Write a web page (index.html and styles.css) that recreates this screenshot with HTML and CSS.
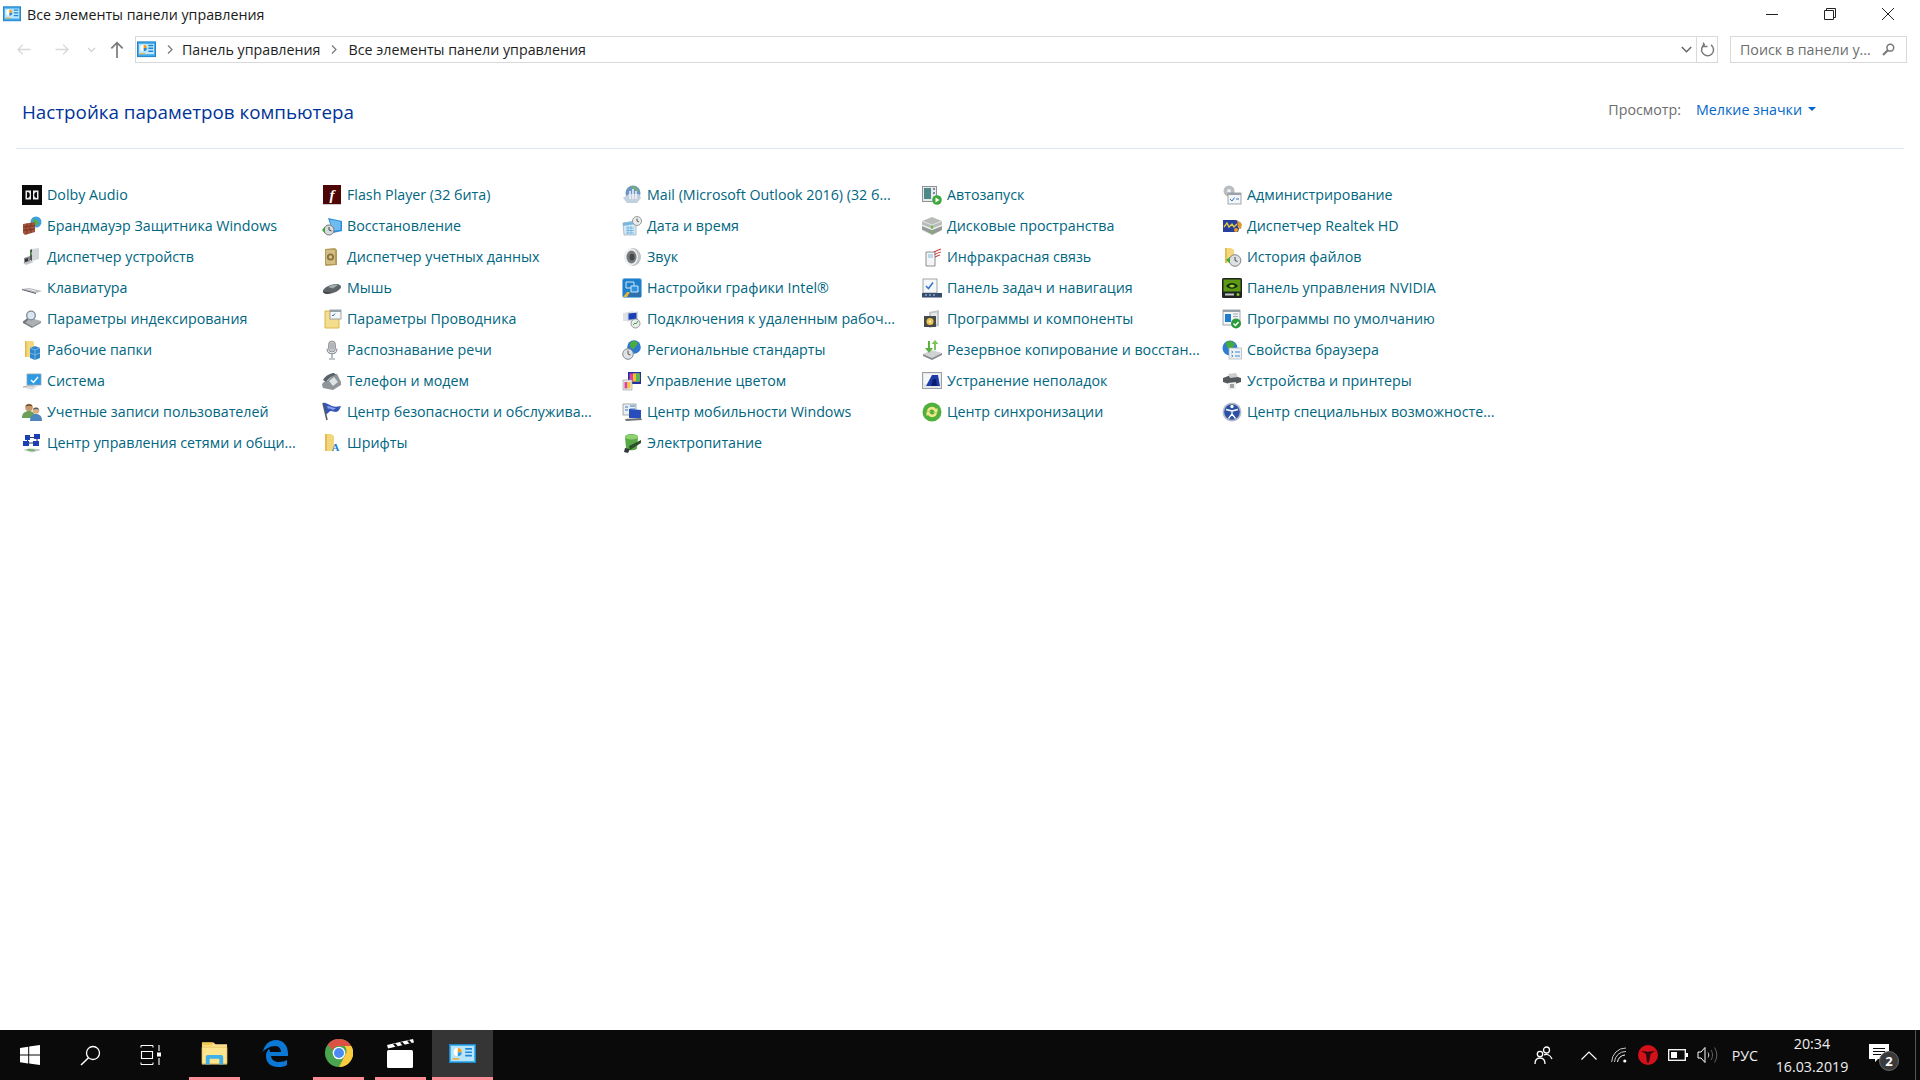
FILE: index.html
```html
<!DOCTYPE html>
<html lang="ru">
  <head>
    <meta charset="UTF-8" />
    <title>Все элементы панели управления</title>
    <link rel="stylesheet" href="styles.css">
  </head>
  <body>
    <svg class="defs" width="0" height="0">
      <symbol id="cp" viewBox="0 0 20 20">
        <rect x="0.5" y="2" width="19" height="15.5" fill="#3aa8ea" stroke="#1d7fc4"/>
        <rect x="2" y="4" width="16" height="11" fill="#bfe6fb"/>
        <circle cx="7" cy="8.5" r="3.4" fill="#fff"/>
        <path d="M7 8.5V5.1a3.4 3.4 0 0 1 3.4 3.4z" fill="#f0a21e"/>
        <path d="M7 8.5h3.4A3.4 3.4 0 0 1 7 11.9z" fill="#2b86d0"/>
        <path d="M12 5h5v1.5h-5zM12 8h5v1.5h-5zM12 11h5v1.5h-5z" fill="#1f87d6"/>
        <path d="M2.500 14h6v1h-6z" fill="#f0a21e"/>
      </symbol>
    </svg>

    <div class="titlebar">
      <svg class="title-icon"><use href="#cp"/></svg>
      <span class="title-text">Все элементы панели управления</span>
      <div class="win-controls">
        <svg width="14" height="14" viewBox="0 0 14 14"><path d="M1 7.500h12" stroke="#222" fill="none"/></svg>
        <svg width="14" height="14" viewBox="0 0 14 14"><path d="M1.500 3.500h9v9h-9zM3.500 3.500v-2h9v9h-2" stroke="#222" fill="none"/></svg>
        <svg width="14" height="14" viewBox="0 0 14 14"><path d="M1 1l12 12M13 1L1 13" stroke="#222" fill="none"/></svg>
      </div>
    </div>

    <div class="navbar">
      <div class="nav-buttons">
        <svg width="16" height="13" viewBox="0 0 14 12"><path d="M13 6H1.500M6 1.500L1.500 6 6 10.500" stroke="#d8d8d8" stroke-width="1.300" fill="none"/></svg>
        <svg width="16" height="13" viewBox="0 0 14 12"><path d="M1 6h11.500M8 1.500L12.500 6 8 10.500" stroke="#d8d8d8" stroke-width="1.300" fill="none"/></svg>
        <svg width="9" height="6" viewBox="0 0 8 6"><path d="M.5 1L4 4.500 7.500 1" stroke="#d0d0d0" stroke-width="1.200" fill="none"/></svg>
        <svg width="14" height="17" viewBox="0 0 12 15"><path d="M6 15V1.500M1 6.500l5-5 5 5" stroke="#7a7a7a" stroke-width="1.500" fill="none"/></svg>
      </div>
      <div class="address">
        <svg class="address-icon"><use href="#cp"/></svg>
        <svg class="crumb-sep" width="6" height="9" viewBox="0 0 6 9"><path d="M1 .5l4 4-4 4" stroke="#777" stroke-width="1.200" fill="none"/></svg>
        <span>Панель управления</span>
        <svg class="crumb-sep" width="6" height="9" viewBox="0 0 6 9"><path d="M1 .5l4 4-4 4" stroke="#777" stroke-width="1.200" fill="none"/></svg>
        <span>Все элементы панели управления</span>
        <svg class="address-drop" width="11" height="7" viewBox="0 0 11 7"><path d="M.8 1l4.700 4.700L10.200 1" stroke="#666" stroke-width="1.500" fill="none"/></svg>
        <div class="refresh">
          <svg width="15" height="15" viewBox="0 0 15 15"><path d="M5 2.300A6 6 0 1 0 11 2.800" stroke="#7a7a7a" stroke-width="1.500" fill="none"/><path d="M3.500 0.500v4h4" stroke="#7a7a7a" stroke-width="1.300" fill="none"/></svg>
        </div>
      </div>
      <div class="search">
        <span>Поиск в панели у...</span>
        <svg width="13" height="13" viewBox="0 0 13 13"><circle cx="8.300" cy="4.700" r="3.400" stroke="#777" stroke-width="1.500" fill="none"/><path d="M5.800 7.200L1 12" stroke="#777" stroke-width="2"/></svg>
      </div>
    </div>

    <main class="content">
      <div class="content-head">
        <h1>Настройка параметров компьютера</h1>
        <div class="view-by">
          <span class="view-label">Просмотр:</span>
          <span class="view-value">Мелкие значки</span>
          <span class="view-caret"></span>
        </div>
      </div>

      <div class="items">
        <a class="item"><svg viewBox="0 0 20 20"><rect width="20" height="20" fill="#0a0a0a"/><path d="M3.500 5.500h5.500v9H3.500zM16.500 5.500H11v9h5.500z" fill="#eee"/><path d="M5 7a3 3 0 0 1 2.800 3A3 3 0 0 1 5 13zM15 7a3 3 0 0 0-2.800 3A3 3 0 0 0 15 13z" fill="#0a0a0a"/></svg>Dolby Audio</a>
        <a class="item"><svg viewBox="0 0 20 20"><circle cx="14" cy="6" r="5.500" fill="#3f9fe0"/><path d="M11 2.500c3 0 4 3 6 3.500-1 3-3 4-5 3z" fill="#55b04a"/><path d="M1 8l12-2v10L3 19 1 17z" fill="#a2543c"/><path d="M1 11l12-1.500M1 14.500l12-1.500M5 7.500v3M9 7v3M4 11v3M8 10.500v3M5 14.500v3.500M9 14v3" stroke="#6f3022" stroke-width=".8"/></svg>Брандмауэр Защитника Windows</a>
        <a class="item"><svg viewBox="0 0 20 20"><path d="M10 2l7-1v11l-7 2z" fill="#d3d6d8"/><path d="M8 3l2-1v12l-2-1z" fill="#555"/><rect x="8.500" y="5" width="1.500" height="3" fill="#53b24a"/><path d="M2 11l6-2v6l-6 2z" fill="#8a8d90"/><path d="M1 16l8-2 3 1-8 3z" fill="#c4c7c9"/><path d="M3 12l3-1v3l-3 1z" fill="#333"/></svg>Диспетчер устройств</a>
        <a class="item"><svg viewBox="0 0 20 20"><path d="M0 11l7-1 13 3-6 2z" fill="#b5b9bc"/><path d="M0 11l14 4v1L0 12z" fill="#54595d"/><path d="M4 11l2-.3 9 2.300-2 .5z" fill="#eef0f1"/></svg>Клавиатура</a>
        <a class="item"><svg viewBox="0 0 20 20"><path d="M1 12l8-3 10 3-9 5z" fill="#aeb1b4"/><path d="M1 12v2l9 5v-2z" fill="#7b7e80"/><path d="M10 17v2l9-5v-2z" fill="#909396"/><circle cx="9" cy="6.500" r="4.300" fill="#d7e8f4" stroke="#7d8a94" stroke-width="1.300"/><path d="M5.500 10L1.500 14" stroke="#6a7076" stroke-width="1.800"/></svg>Параметры индексирования</a>
        <a class="item"><svg viewBox="0 0 20 20"><path d="M3 1h8l1 2v14H3z" fill="#f4d77f"/><path d="M3 1h1.500v16H3z" fill="#e2b94f"/><path d="M8 8l5-2 5 2v10l-5 2-5-2z" fill="#2f86c8"/><path d="M8 8l5 2 5-2M13 10v10M8 13l5 2 5-2" stroke="#7fc0ee" stroke-width=".8" fill="none"/></svg>Рабочие папки</a>
        <a class="item"><svg viewBox="0 0 20 20"><path d="M5 3h14v11H5z" fill="#2d9be4" stroke="#8aa2b2" stroke-width=".8"/><path d="M9 9l2.500 2.500L16 6" stroke="#fff" stroke-width="1.400" fill="none"/><path d="M0 16l7-2 9 1-6 4z" fill="#dcdfe1"/><path d="M1 16.200l6-1.700 5 .6" stroke="#a7abae" fill="none"/></svg>Система</a>
        <a class="item"><svg viewBox="0 0 20 20"><circle cx="7" cy="5.500" r="3.800" fill="#c79a6d"/><path d="M3.500 4.500c1-3 6-3 7 0-2-1-5-1-7 0z" fill="#6b4a2a"/><path d="M0 16c0-5 3-7 7-7s6 2 6 7z" fill="#6aa05a"/><circle cx="14" cy="8.500" r="3.300" fill="#d9ae83"/><path d="M11 7.500c.8-2.500 5-2.500 6 0-2-.8-4-.8-6 0z" fill="#4e5a6b"/><path d="M8 19c0-5 2.500-7 6-7s6 2 6 7z" fill="#4b87bd"/></svg>Учетные записи пользователей</a>
        <a class="item"><svg viewBox="0 0 20 20"><path d="M3 2h5v5H3zM12 1h6v5h-6zM1 8h6v5H1zM11 8h6v5h-6z" fill="#1d3fb4"/><path d="M5.500 7v1M15 6v2M7 10h4M8 4.500h4" stroke="#333a66"/><path d="M1 17l6-1.500 9 .5 3 1-9 2.500z" fill="#c2c6c8"/><path d="M5 16l7 .5 1 1.500-7-.5z" fill="#58b848"/></svg>Центр управления сетями и общи...</a>

        <a class="item"><svg viewBox="0 0 20 20"><rect x="1" width="18" height="19" fill="#4d0505"/><rect x="1" y="19" width="18" height="1" fill="#ccc"/><text x="10" y="15" text-anchor="middle" class="flash-f">f</text></svg>Flash Player (32 бита)</a>
        <a class="item"><svg viewBox="0 0 20 20"><path d="M6 2l14 3v10l-9 2z" fill="#2d8fdb"/><path d="M8 3.500l10.500 2.300v8L10 15z" fill="#6fbdf0"/><circle cx="7" cy="14" r="5" fill="#d8dbdd" stroke="#777"/><path d="M7 11v3l2.500 1" stroke="#444" fill="none"/><path d="M0 14l3-3.500v7z" fill="#3fa83c"/></svg>Восстановление</a>
        <a class="item"><svg viewBox="0 0 20 20"><path d="M3 2l10-1 2 2v15l-11 1-1-1z" fill="#b59a5a"/><path d="M4 3h9v14H4z" fill="#d3bd82"/><circle cx="8.500" cy="10" r="3.600" fill="#8b7340"/><circle cx="8.500" cy="10" r="1.700" fill="#d9c68f"/></svg>Диспетчер учетных данных</a>
        <a class="item"><svg viewBox="0 0 20 20"><path d="M1 13c0-3 7-7 13-7 4 0 5 2 5 3 0 3-8 7-13 7-4 0-5-1-5-3z" fill="#5d6367"/><path d="M6 9c3-2 6-3 10-2l-5 3.500z" fill="#a4a9ac"/><path d="M1 13c1 3 5 3 9 1.500-4 .5-7 0-9-1.500z" fill="#2e3235"/></svg>Мышь</a>
        <a class="item"><svg viewBox="0 0 20 20"><path d="M3 2h8v4h6v13H3z" fill="#f5dd8e" stroke="#dcb446"/><rect x="8" y="1" width="11" height="9" fill="#f4f6f7" stroke="#8a9096" stroke-width=".8"/><rect x="8" y="1" width="11" height="2" fill="#98a2aa"/><path d="M10 6l1 1 2-2.500" stroke="#2c74c9" fill="none"/></svg>Параметры Проводника</a>
        <a class="item"><svg viewBox="0 0 20 20"><rect x="6.500" y="1" width="7" height="11" rx="3.500" fill="#c3c7ca" stroke="#81868a" stroke-width=".8"/><path d="M7.500 4h5M7.500 6h5M7.500 8h5" stroke="#8f9498" stroke-width=".7"/><path d="M5 8.500c0 7 10 7 10 0M10 14v4M7 19h6" stroke="#8a8f93" stroke-width="1.200" fill="none"/></svg>Распознавание речи</a>
        <a class="item"><svg viewBox="0 0 20 20"><path d="M0 14c0-2 3-4 5-4L12 3h3l4 8v3l-8 5-10-2z" fill="#8f9599"/><path d="M1 9c3-5 8-7 11-7l2 2c-3 0-7 3-10 7z" fill="#58626a"/><path d="M7 10l5-4 4 5-5 4z" fill="#dfe3e5"/></svg>Телефон и модем</a>
        <a class="item"><svg viewBox="0 0 20 20"><path d="M1 1c2-1 4 1 7 2 3 2 6 2 11 1-1 3-3 6-5 6-3 0-5-2-7 0-1 1-2 2-3 2z" fill="#3454b7"/><path d="M5 4c3 0 5 2 9 2l-3 2c-2-1-4-2-5-1z" fill="#8ea3e6"/><path d="M1 1l4 17" stroke="#4f565e" stroke-width="1.500"/></svg>Центр безопасности и обслужива...</a>
        <a class="item"><svg viewBox="0 0 20 20"><path d="M3 1h6l3 2v15H3z" fill="#f3d67c"/><path d="M3 1h2v17H3z" fill="#e3bc55"/><text x="13.500" y="17.500" text-anchor="middle" class="font-a">A</text></svg>Шрифты</a>

        <a class="item"><svg viewBox="0 0 20 20"><circle cx="11" cy="8" r="7.500" fill="#6d95c4"/><path d="M8 2c4-2 8 1 9 5-3-1-5-4-9-5z" fill="#79b06f"/><path d="M1 13l6-4h10l2 4-4 5H5z" fill="#c3d0e0"/><path d="M8 6v8M11 4v10M14 6v8" stroke="#f2f4f7" stroke-width="1.500"/></svg>Mail (Microsoft Outlook 2016) (32 б...</a>
        <a class="item"><svg viewBox="0 0 20 20"><path d="M1 7l13-2v14H2z" fill="#d3e8f5" stroke="#94aab8" stroke-width=".7"/><path d="M1 7l13-2v3L1 10z" fill="#78b7e0"/><path d="M4 12h8M4 14.500h8M4 17h8M6 10v8M9 10v8" stroke="#6ab0de" stroke-width=".8"/><circle cx="15" cy="5" r="4.500" fill="#e8eaeb" stroke="#999"/><path d="M15 2.500V5l2 1" stroke="#555" fill="none"/></svg>Дата и время</a>
        <a class="item"><svg viewBox="0 0 20 20"><ellipse cx="11" cy="10" rx="8" ry="9" fill="#c0c3c5"/><ellipse cx="9" cy="10" rx="7" ry="8.500" fill="#eef0f1"/><ellipse cx="9.500" cy="10" rx="5" ry="6.500" fill="#777b7e"/><ellipse cx="10" cy="10" rx="2.500" ry="3.500" fill="#44484b"/></svg>Звук</a>
        <a class="item"><svg viewBox="0 0 20 20"><rect x=".5" y=".5" width="19" height="19" rx="2" fill="#1f7fcb" stroke="#7fb9e5"/><path d="M1 19L5 14h14v5z" fill="#2f6fab"/><path d="M1 19l4-5h3l-3 5z" fill="#e2b63d"/><path d="M4 4h8v6H4z" fill="none" stroke="#cfeafc"/><path d="M9 8h7v6H9z" fill="#2f91d9" stroke="#cfeafc"/></svg>Настройки графики Intel®</a>
        <a class="item"><svg viewBox="0 0 20 20"><path d="M1 4l10-2v10L1 12z" fill="#e0e3e5"/><path d="M5 3.500l11-1v9l-11 1z" fill="#d5dade"/><path d="M6.500 4.500l8-.8v6.300l-8 .7z" fill="#1b3fb5"/><circle cx="13.500" cy="14.500" r="4.500" fill="#e9eced" stroke="#93999d"/><path d="M11 16l2-2 1 1 2-3" stroke="#48a83f" fill="none"/></svg>Подключения к удаленным рабоч...</a>
        <a class="item"><svg viewBox="0 0 20 20"><circle cx="12" cy="7" r="6.800" fill="#2f78d0"/><path d="M8 3c3-3 6-2 8 0-1 3-3 3-4 6-3 0-4-3-4-6z" fill="#49ad3e"/><circle cx="6" cy="14" r="5.300" fill="#dfe2e4" stroke="#848a8e"/><path d="M6 10.500V14l2.500 1" stroke="#555" fill="none"/></svg>Региональные стандарты</a>
        <a class="item"><svg viewBox="0 0 20 20"><rect x="6" y="1" width="13" height="12" fill="#23319d"/><path d="M7.500 2.500h10v8h-10z" fill="#e23ca5"/><path d="M11 2.500h6.500v8H11z" fill="#f2c12f"/><path d="M14 2.500h3.500v8H14z" fill="#4aba52"/><path d="M1 9h9v10H1z" fill="#e9ebec" stroke="#9ba0a4" stroke-width=".7"/><path d="M2.500 11h3v6.500h-3z" fill="#e0419f"/><path d="M5.500 11h3v6.500h-3z" fill="#f0cc2c"/></svg>Управление цветом</a>
        <a class="item"><svg viewBox="0 0 20 20"><path d="M1 2h13v11H1z" fill="#eceff1" stroke="#8f979e" stroke-width=".8"/><path d="M3 5h3M3 8h3M8 4h5M8 7h5" stroke="#2d78c8"/><path d="M7 7l12 1v8L7 16z" fill="#2a4dbc"/><path d="M3 17l16-1 1 2-16 1z" fill="#6a7075"/></svg>Центр мобильности Windows</a>
        <a class="item"><svg viewBox="0 0 20 20"><path d="M3 4c0-4 13-4 13 0l-1 11c0 3-11 3-11 0z" fill="#57a945"/><ellipse cx="9.500" cy="4" rx="6.500" ry="2.500" fill="#8fd070"/><path d="M7 13l12-6v3L8 17z" fill="#2f4f2c"/><path d="M3 15l5 1-2 4-4-1z" fill="#34393c"/></svg>Электропитание</a>

        <a class="item"><svg viewBox="0 0 20 20"><rect x=".5" y="1.500" width="14" height="15" fill="#e8ebed" stroke="#8d9296"/><rect x="2" y="3" width="7" height="11" fill="#4c8a8a"/><path d="M11 3h2v2h-2zM11 7h2v2h-2z" fill="#7d8c97"/><circle cx="15" cy="15" r="4.800" fill="#3fa83c"/><path d="M13.500 12.500l4 2.500-4 2.500z" fill="#fff"/></svg>Автозапуск</a>
        <a class="item"><svg viewBox="0 0 20 20"><path d="M0 5l10-4 10 4v4L10 13 0 9z" fill="#b9bdb9"/><path d="M0 10l10 4 10-4v4l-10 5-10-5z" fill="#979b97"/><path d="M0 5l10 4 10-4M0 9l10 4 10-4M0 14l10 5" stroke="#ececec" stroke-width=".8" fill="none"/><path d="M9 9.500l2 .5v3l-2-.5zM9 14.500l2 .5v3l-2-.5z" fill="#6dbb4b"/></svg>Дисковые пространства</a>
        <a class="item"><svg viewBox="0 0 20 20"><path d="M4 5h9v14H4z" fill="#f4f5f6" stroke="#6f7478" stroke-width=".8"/><path d="M6 7h5v4H6z" fill="#bcd7ea"/><path d="M12 5c2-1 4-2 7-3M12.500 7.500c2-1 4-2 6.500-2.500M13 10c2-1 3-1.500 5-2" stroke="#c74343" stroke-width="1.200" fill="none"/></svg>Инфракрасная связь</a>
        <a class="item"><svg viewBox="0 0 20 20"><rect x="1" y="1" width="14" height="14" fill="#f5f7f8" stroke="#8b9195" stroke-width=".8"/><path d="M4 8l2.500 2.500L11 4.500" stroke="#2f75c9" stroke-width="1.500" fill="none"/><path d="M0 15h20v4.500H0z" fill="#344c70"/><path d="M3 16.500h2v1H3zM7 16.500h2v1H7zM11 16.500h2v1h-2z" fill="#c4d0df"/></svg>Панель задач и навигация</a>
        <a class="item"><svg viewBox="0 0 20 20"><path d="M7 3l10-2v16l-10 2z" fill="#c4c7c9"/><path d="M9 4.500l6-1v11l-6 1z" fill="#e7e9ea"/><rect x="2" y="7" width="12" height="11" fill="#454a4d"/><circle cx="8" cy="12.500" r="3.500" fill="#efc64f"/><circle cx="8" cy="12.500" r="1" fill="#f8f8f8"/></svg>Программы и компоненты</a>
        <a class="item"><svg viewBox="0 0 20 20"><path d="M1 14l9-4 10 3-10 5z" fill="#d0d2d3"/><path d="M1 14v2l9 4 10-5v-2l-10 5z" fill="#878a8c"/><path d="M6 1v7H3l4 5 4-5H8V1z" fill="#5ab13f"/><path d="M12 10V4H9.500l3.500-4 3.500 4H14v6z" fill="#7cc55a"/></svg>Резервное копирование и восстан...</a>
        <a class="item"><svg viewBox="0 0 20 20"><rect x=".5" y="1.500" width="19" height="16" fill="#e4e7e9" stroke="#9ca1a5"/><path d="M2 3h16v10H2z" fill="#f5f6f7"/><path d="M4 15l6-11 6 0 2 11z" fill="#1d3ca8"/><path d="M9 15l2-7h3l1 7z" fill="#0c1f6f"/></svg>Устранение неполадок</a>
        <a class="item"><svg viewBox="0 0 20 20"><circle cx="10" cy="10" r="9.500" fill="#4fb13c"/><path d="M5 9a5 5 0 0 1 9-2l1.500-1v4.500H11l1.500-1.200A3 3 0 0 0 7 9.500z" fill="#f5e68a"/><path d="M15 11a5 5 0 0 1-9 2l-1.500 1V9.500H9L7.500 10.700A3 3 0 0 0 13 10.500z" fill="#f5e68a"/></svg>Центр синхронизации</a>
        <span class="item-empty"></span>

        <a class="item"><svg viewBox="0 0 20 20"><circle cx="7" cy="6" r="5.500" fill="#b9bdc0"/><circle cx="7" cy="6" r="2" fill="#eee"/><rect x="6" y="8" width="13" height="11" fill="#f4f5f6" stroke="#8c9196" stroke-width=".8"/><rect x="6" y="8" width="13" height="2" fill="#9aa3aa"/><path d="M8 14l2 2 2.500-3.500M14 14h3" stroke="#2c76c9" fill="none"/></svg>Администрирование</a>
        <a class="item"><svg viewBox="0 0 20 20"><path d="M1 4h13l5 3-3 9H1z" fill="#263f9c"/><path d="M2 11l3-4 2 4 3-3 2 3 3-3" stroke="#e6cc3f" stroke-width="1.400" fill="none"/><path d="M15 4l5 4-1 5-3-1z" fill="#d99a36"/><circle cx="14" cy="14" r="2" fill="#ef9a1d"/></svg>Диспетчер Realtek HD</a>
        <a class="item"><svg viewBox="0 0 20 20"><path d="M3 1h6l3 2v13H3z" fill="#f4d77c"/><path d="M3 1h2v15H3z" fill="#e4bd58"/><circle cx="13" cy="13.500" r="5.800" fill="#dde0e2" stroke="#7c8184"/><path d="M13 10v3.500l2.500 1" stroke="#444" fill="none"/><path d="M4 13l4-3v6z" fill="#3fa83c"/></svg>История файлов</a>
        <a class="item"><svg viewBox="0 0 20 20"><rect width="20" height="20" rx="1.500" fill="#1f2321"/><rect x="1.500" y="1.500" width="17" height="12" fill="#5b9a12"/><path d="M4 8c3-4 9-4 12 0-3 3.500-9 3.500-12 0z" fill="#1c2a10"/><path d="M7 8c2-2 4-2 6 0-2 2-4 2-6 0z" fill="#92d331"/><path d="M3 15.500h9v2H3z" fill="#c3c7c5"/><circle cx="16" cy="16.500" r="1.500" fill="#7fbf2b"/></svg>Панель управления NVIDIA</a>
        <a class="item"><svg viewBox="0 0 20 20"><rect x="1" y="1" width="17" height="15" fill="#f3f5f6" stroke="#8d9398" stroke-width=".8"/><rect x="1" y="1" width="17" height="2" fill="#98a2aa"/><path d="M3 5h6v8H3z" fill="#1f7dd0"/><path d="M11 5h5M11 7.500h5" stroke="#a2a8ad"/><circle cx="14" cy="14.500" r="5" fill="#2c9a3b"/><path d="M11.500 14.500l2 2 3-3.500" stroke="#fff" stroke-width="1.400" fill="none"/></svg>Программы по умолчанию</a>
        <a class="item"><svg viewBox="0 0 20 20"><circle cx="8" cy="8" r="7.500" fill="#2d7cd2"/><path d="M4 2c3-2 7-1 9 2-1 3-3 3-4 6-3 0-5-4-5-8z" fill="#46a93c"/><rect x="7" y="8" width="12.500" height="11" fill="#eef1f3" stroke="#aab0b4" stroke-width=".7"/><path d="M9.500 11l1.500 1-1.500 1M9.500 15l1.500 1-1.500 1M13 12h5M13 16h5" stroke="#3d8ad6" fill="none"/></svg>Свойства браузера</a>
        <a class="item"><svg viewBox="0 0 20 20"><path d="M1 7l8-3 10 3v4l-9 3-9-3z" fill="#54595d"/><path d="M6 3l8-1 2 4-8 1z" fill="#c9cdcf"/><path d="M6 12l8-1v7l-8 1z" fill="#eceeef"/><path d="M8 14h4M8 16h4" stroke="#555"/></svg>Устройства и принтеры</a>
        <a class="item"><svg viewBox="0 0 20 20"><circle cx="10" cy="10" r="9.500" fill="#b5bcc7"/><circle cx="10" cy="10" r="7.800" fill="#2c4fa8"/><circle cx="10" cy="4.500" r="1.700" fill="#fff"/><path d="M4 7.500l6 1.500 6-1.500M10 9v3l-3.500 4.500M10 12l3.500 4.500" stroke="#fff" stroke-width="1.300" fill="none"/></svg>Центр специальных возможносте...</a>
        <span class="item-empty"></span>
      </div>
    </main>

    <footer class="taskbar">
      <div class="task-start">
        <svg width="20" height="20" viewBox="0 0 20 20"><path d="M0 2.900l8.200-1.100v7.800H0zM9.200 1.600L20 0v9.600H9.200zM0 10.500h8.200v7.900L0 17.200zM9.200 10.500H20V20L9.200 18.500z" fill="#fff"/></svg>
      </div>
      <div class="task-tool">
        <svg width="21" height="21" viewBox="0 0 21 21"><circle cx="13" cy="8" r="6.500" stroke="#fff" stroke-width="1.300" fill="none"/><path d="M8.500 12.700L1 20" stroke="#fff" stroke-width="1.500"/></svg>
      </div>
      <div class="task-tool">
        <svg width="21" height="20" viewBox="0 0 21 20"><path d="M1 .5h12M1 2.500v-2M13 2.500v-2M1 19.500h12M1 17.500v2M13 17.500v2M1.500 6.500h11v7h-11zM19 0v6M19 13v7" stroke="#fff" stroke-width="1.100" fill="none"/><rect x="17" y="7.500" width="4" height="4" fill="#fff"/></svg>
      </div>
      <div class="task-app running">
        <svg width="27" height="24" viewBox="0 0 28 24"><path d="M1 1h12l2 2h12v21H1z" fill="#fbe08f"/><path d="M1 1h11v3H1z" fill="#f4c94f"/><path d="M1 6h26v17H1z" fill="#ffe58e" stroke="#d9b24a" stroke-width=".6"/><path d="M5 24v-8c0-1 1-2 2-2h14c1 0 2 1 2 2v8h-4v-6H9v6z" fill="#3fb0ea"/></svg>
      </div>
      <div class="task-app">
        <svg class="edge-icon" width="26" height="27" viewBox="0 0 26 27"><path d="M1 12C2 5 7 0 14 0c7 0 12 5 12 14v2H9c.5 4 4 6 8 6 3 0 6-1 8-2v5c-3 2-6 2-9 2-7 0-12-4-12-11 0-3 1-5 3-7 1 1 1 3 1 3h11c0-3-2-6-6-6-5 0-9 3-13 6z" fill="#0b78d6"/></svg>
      </div>
      <div class="task-app running">
        <svg width="28" height="28" viewBox="0 0 28 28"><circle cx="14" cy="14" r="14" fill="#4aa54f"/><path d="M14 0a14 14 0 0 1 12.300 7H14a7 7 0 0 0-6.600 4.500L2.900 5.400A14 14 0 0 1 14 0z" fill="#dd5044"/><path d="M26.300 7A14 14 0 0 1 14 28l6-11.500A7 7 0 0 0 19.500 7z" fill="#fbcc3e"/><circle cx="14" cy="14" r="6.300" fill="#fff"/><circle cx="14" cy="14" r="5" fill="#4a8af2"/></svg>
      </div>
      <div class="task-app running">
        <svg width="27" height="29" viewBox="0 0 27 29"><path d="M0 6L26 0l1 3.500L1 9.500z" fill="#fff"/><path d="M6 5l2.500 3L11 7.500 8.500 4.500zM13 3.500l2.500 3 2.500-.5-2.500-3zM20 1.800l2.500 3 2.500-.6-2.500-3z" fill="#0a0a0a"/><rect y="11" width="26" height="18" rx="1.500" fill="#fff"/></svg>
      </div>
      <div class="task-app running active">
        <svg width="27" height="19" viewBox="0 0 20 14" preserveAspectRatio="none"><rect x=".3" y=".3" width="19.400" height="13.400" fill="#43b3f0" stroke="#1c88cf" stroke-width=".6"/><rect x="1.500" y="1.500" width="17" height="11" fill="#b9e5fb"/><circle cx="6.500" cy="6" r="3" fill="#fff"/><path d="M6.500 6V3a3 3 0 0 1 3 3z" fill="#f0a21e"/><path d="M6.500 6h3a3 3 0 0 1-3 3z" fill="#2f9ae0"/><path d="M12 3h5v1.200h-5zM12 5.500h5v1.200h-5zM12 8h5v1.200h-5z" fill="#1f87d6"/><path d="M2.500 10.500h5v1h-5z" fill="#f0a21e"/></svg>
      </div>

      <div class="tray">
        <svg class="tray-people" width="19" height="19" viewBox="0 0 19 19"><circle cx="12.500" cy="4" r="3" stroke="#fff" stroke-width="1.300" fill="none"/><circle cx="6" cy="8" r="2.700" stroke="#fff" stroke-width="1.300" fill="none"/><path d="M1 18c0-4 2-6 5-6s5 2 5 6M10 9c2-1 6-1 8 4" stroke="#fff" stroke-width="1.300" fill="none"/></svg>
        <svg class="tray-chevron" width="16" height="9" viewBox="0 0 16 9"><path d="M.5 8.500L8 1l7.500 7.500" stroke="#fff" stroke-width="1.200" fill="none"/></svg>
        <svg class="tray-wifi" width="16" height="16" viewBox="0 0 16 16"><path d="M.7 15A14 14 0 0 1 15 1M3.500 15A11 11 0 0 1 15 4.500" stroke="#c8c8c8" stroke-width="1" fill="none"/><path d="M6.500 15A8 8 0 0 1 14 8" stroke="#fff" stroke-width="1" fill="none"/><circle cx="13.800" cy="14" r="1.600" fill="#fff"/></svg>
        <svg class="tray-red" width="20" height="20" viewBox="0 0 20 20"><circle cx="10" cy="10" r="10" fill="#d4111b"/><path d="M2.500 5.500c4 1.500 11 1.500 15 0l-5 3.500L11 17.500H9L8 9z" fill="#2a0a0c"/></svg>
        <svg class="tray-battery" width="20" height="12" viewBox="0 0 20 12"><rect x=".7" y=".7" width="16.600" height="10.600" stroke="#fff" stroke-width="1.300" fill="none"/><rect x="3" y="3" width="6" height="6" fill="#fff"/><rect x="18" y="4" width="2" height="4" fill="#fff"/></svg>
        <svg class="tray-sound" width="21" height="18" viewBox="0 0 21 18"><path d="M1 6h3l4-4.500v15L4 12H1z" stroke="#fff" fill="none"/><path d="M11 6.500c1 1.500 1 3.500 0 5" stroke="#ddd" fill="none"/><path d="M14 4c2 3 2 7 0 10M17.500 1.500c3 4.500 3 10.500 0 15" stroke="#666" fill="none"/></svg>
        <span class="tray-lang">РУС</span>
        <div class="tray-clock"><span>20:34</span><span>16.03.2019</span></div>
        <div class="tray-notify">
          <svg width="20" height="18" viewBox="0 0 20 18"><path d="M0 0h20v15H9l-3 3v-3H0z" fill="#fff"/><path d="M4 4.500h12M4 7.500h12M4 10.500h8" stroke="#0a0a0a"/></svg>
          <span class="tray-badge">2</span>
        </div>
        <span class="tray-desktop"></span>
      </div>
    </footer>
  </body>
</html>
```

FILE: styles.css
```css
* {
  box-sizing: border-box;
}

html,
body {
  height: 100%;
}

body {
  margin: 0;
  display: flex;
  flex-direction: column;
  height: 1080px;
  overflow: hidden;
  background-color: #ffffff;
  color: #1a1a1a;
  font-family: "Open Sans", "Noto Sans", sans-serif;
  font-size: 14.25px;
}

.defs {
  position: absolute;
}

.titlebar {
  display: flex;
  align-items: center;
  height: 30px;
  padding: 0 0 2px 3px;
}

.title-icon {
  width: 18px;
  height: 18px;
  margin-right: 6px;
}

.win-controls {
  display: flex;
  gap: 44px;
  margin-left: auto;
  margin-right: 25px;
}

.navbar {
  display: flex;
  align-items: center;
  height: 27px;
  margin-top: 6px;
  padding-right: 13px;
}

.nav-buttons {
  display: flex;
  align-items: center;
  width: 135px;
  padding-left: 16px;
}

.nav-buttons svg:nth-child(2) {
  margin-left: 22px;
}

.nav-buttons svg:nth-child(3) {
  margin-left: 17px;
}

.nav-buttons svg:nth-child(4) {
  margin-left: 14px;
}

.address {
  display: flex;
  align-items: center;
  flex: 1;
  height: 27px;
  border: 1px solid #d9d9d9;
  padding-left: 1px;
  color: #1e1e1e;
}

.address-icon {
  width: 19px;
  height: 19px;
}

.crumb-sep {
  margin: 0 12px 0 10px;
}

.address-icon + .crumb-sep {
  margin: 0 9px 0 11px;
}

.address-drop {
  margin-left: auto;
  margin-right: 4px;
}

.refresh {
  display: flex;
  align-items: center;
  justify-content: center;
  width: 21px;
  height: 25px;
  border-left: 1px solid #d9d9d9;
}

.search {
  display: flex;
  align-items: center;
  justify-content: space-between;
  width: 177px;
  height: 27px;
  margin-left: 12px;
  padding: 0 11px 0 9px;
  border: 1px solid #d9d9d9;
  color: #6d6d6d;
}

.content {
  flex: 1;
  padding: 0 16px;
}

.content-head {
  display: flex;
  align-items: center;
  justify-content: space-between;
  height: 86px;
  padding: 12px 88px 0 6px;
  border-bottom: 1px solid #dbe8f4;
}

h1 {
  margin: 0;
  color: #003399;
  font-size: 18.8px;
  font-weight: 400;
}

.view-by {
  display: flex;
  align-items: center;
  margin-bottom: 4px;
}

.view-label {
  color: #6d6d6d;
  margin-right: 15px;
}

.view-value {
  color: #0066cc;
}

.view-caret {
  width: 0;
  height: 0;
  margin-left: 6px;
  margin-bottom: 2px;
  border-style: solid;
  border-width: 4px 4px 0;
  border-color: #0066cc transparent transparent;
}

.items {
  display: grid;
  grid-auto-flow: column;
  grid-template-columns: repeat(5, 300px);
  grid-template-rows: repeat(9, 31px);
  margin-top: 30px;
  padding-left: 6px;
}

.item {
  display: flex;
  align-items: center;
  gap: 5px;
  color: #00667f;
  white-space: nowrap;
}

.item svg {
  flex: none;
  width: 20px;
  height: 20px;
}

.flash-f {
  fill: #ffffff;
  font-family: "Liberation Serif", serif;
  font-size: 15px;
  font-style: italic;
  font-weight: 700;
}

.font-a {
  fill: #1c7fd0;
  font-family: "Liberation Serif", serif;
  font-size: 11px;
  font-weight: 700;
}

.taskbar {
  display: flex;
  align-items: center;
  flex: none;
  height: 50px;
  background-color: #0a0a0a;
  color: #ffffff;
}

.task-start {
  display: flex;
  justify-content: center;
  width: 60px;
}

.task-tool {
  display: flex;
  justify-content: center;
  width: 60px;
}

.task-app {
  display: flex;
  align-items: center;
  justify-content: center;
  width: 51px;
  height: 50px;
  margin-left: 11px;
  padding-bottom: 1px;
  border-bottom: 3px solid transparent;
}

.task-tool + .task-app {
  margin-left: 9px;
}

.task-app.running {
  border-bottom-color: #ff8d95;
}

.task-app.active {
  width: 61px;
  margin-left: 6px;
  background-color: #353535;
}

.edge-icon {
  margin-right: 3px;
}

.tray {
  display: flex;
  align-items: center;
  height: 100%;
  margin-left: auto;
}

.tray-chevron {
  margin-left: 28px;
}

.tray-wifi {
  margin-left: 14px;
}

.tray-red {
  margin-left: 11px;
}

.tray-battery {
  margin-left: 10px;
}

.tray-sound {
  margin-left: 9px;
}

.tray-lang {
  margin-left: 14px;
  color: #eeeeee;
}

.tray-clock {
  display: flex;
  flex-direction: column;
  align-items: center;
  gap: 3px;
  width: 90px;
  margin-left: 9px;
  color: #eeeeee;
  line-height: 20px;
}

.tray-notify {
  position: relative;
  display: flex;
  margin-left: 12px;
  margin-bottom: 4px;
}

.tray-badge {
  position: absolute;
  right: -10px;
  bottom: -9px;
  display: flex;
  align-items: center;
  justify-content: center;
  width: 20px;
  height: 20px;
  border-radius: 50%;
  border: 1px solid #666666;
  background-color: #3a3a3a;
  font-size: 13px;
  font-weight: 700;
}

.tray-desktop {
  width: 1px;
  height: 100%;
  margin-left: 26px;
  margin-right: 4px;
  background-color: #555555;
}
```
